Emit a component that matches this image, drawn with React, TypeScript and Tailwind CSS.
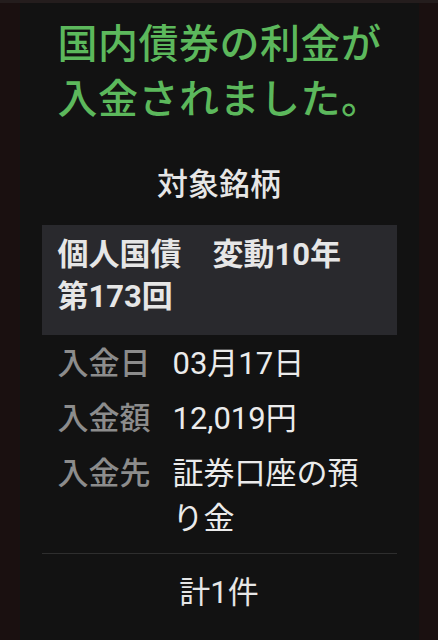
const font = { fontFamily: 'Roboto, "Noto Sans CJK JP", "Noto Sans", sans-serif' };

const rows: { label: string; value: string }[] = [
  { label: '入金日', value: '03月17日' },
  { label: '入金額', value: '12,019円' },
  { label: '入金先', value: '証券口座の預り金' },
];

export default function App() {
  return (
    <div
      className="w-[438px] h-[640px] bg-[#1a1010] border-t-[3px] border-[#241d1d] flex justify-center overflow-hidden"
      style={font}
    >
      <div className="w-[399px] bg-[#121212] px-[22px]">
        {/* headline */}
        <h1 className="pl-4 pt-[14px] text-[40px] leading-[55px] font-medium text-[#5cb85c] tracking-[0.5px]">
          国内債券の利金が
          <br />
          入金されました。
        </h1>

        <div className="mt-[36px] text-center text-[31px] leading-[44px] font-medium text-[#e6e6e6]">
          対象銘柄
        </div>

        {/* bond name */}
        <div className="mt-[18px] bg-[#29292d] px-4 pt-[9px] pb-[17px] text-[31px] leading-[42px] font-bold text-[#e6e6e6]">
          個人国債　変動10年
          <br />
          第173回
        </div>

        {/* details */}
        <div className="px-4 pb-[12px] flex flex-col gap-[10px]">
          {rows.map((r) => (
            <div key={r.label} className="flex text-[31px] leading-[45px] first:mt-[6px]">
              <div className="w-[115px] shrink-0 font-medium text-[#8c8c8c]">{r.label}</div>
              <div className="flex-1 text-[#ebebeb]">{r.value}</div>
            </div>
          ))}
        </div>

        <div className="border-t border-[#2e2e2e]" />

        <div className="pt-[17px] text-center text-[31px] leading-[44px] text-[#e6e6e6]">計1件</div>
      </div>
    </div>
  );
}
